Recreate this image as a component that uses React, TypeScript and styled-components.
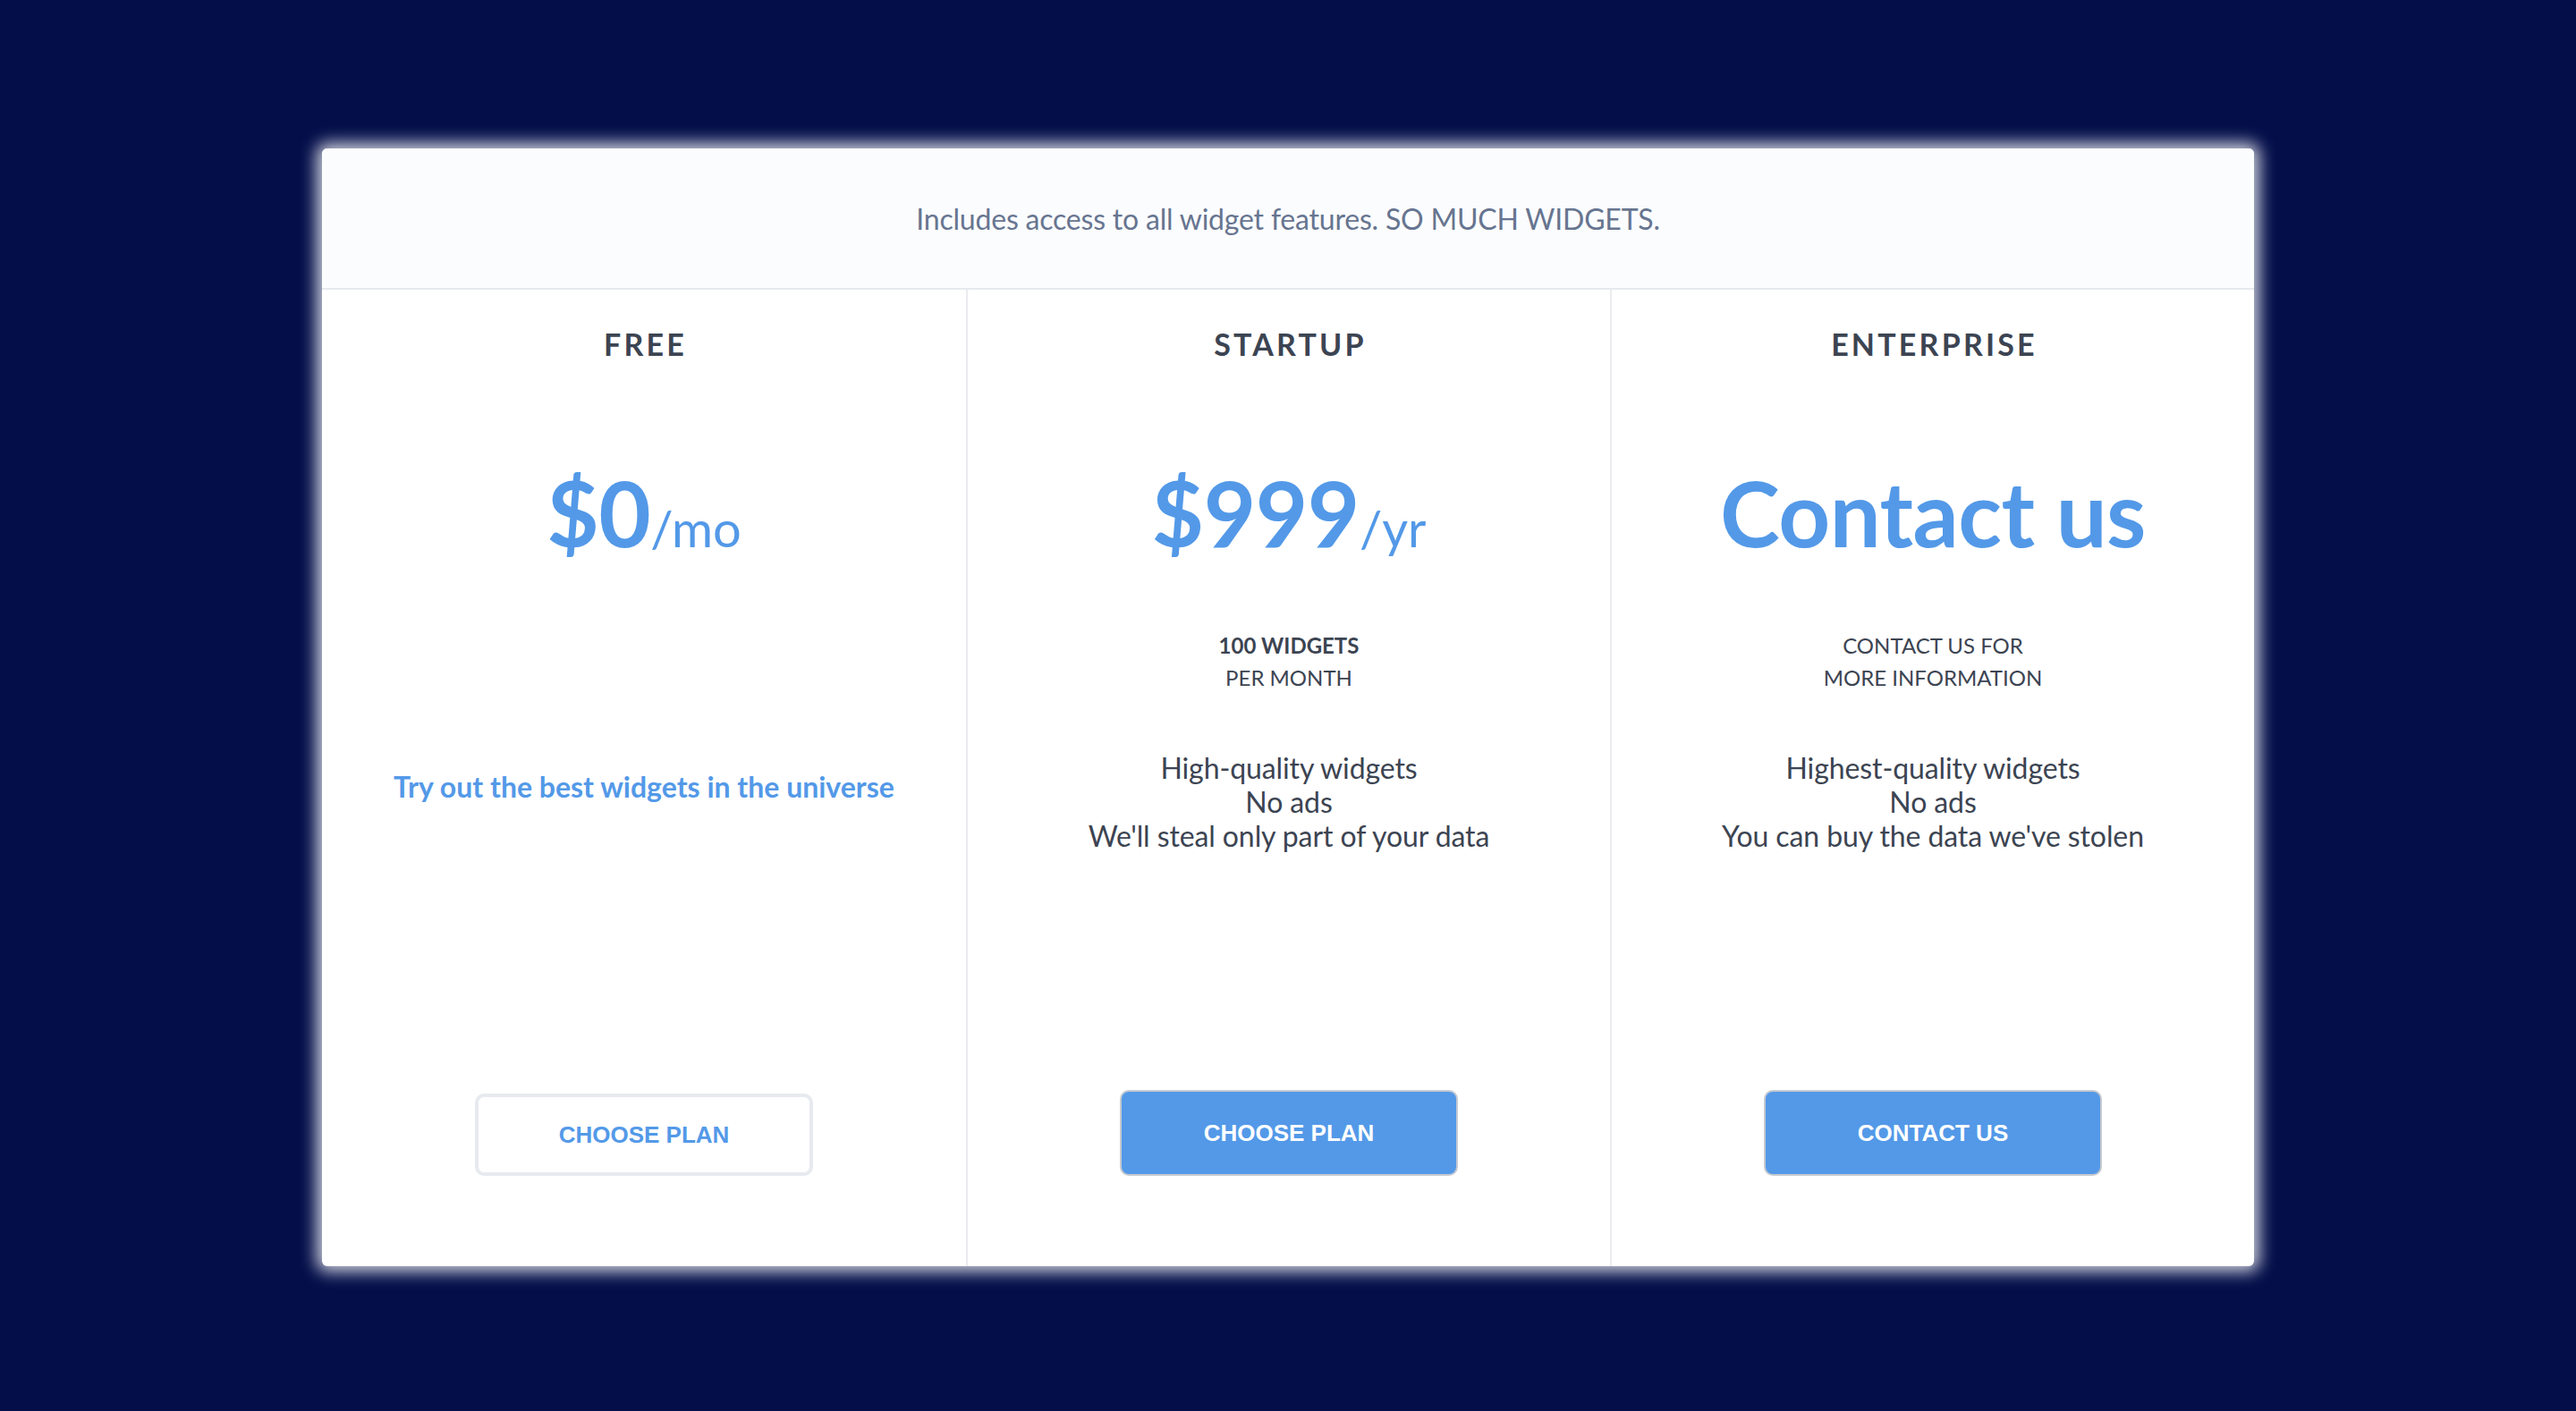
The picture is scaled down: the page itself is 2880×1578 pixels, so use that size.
import React from "react";
import styled, { createGlobalStyle } from "styled-components";

const GlobalStyle = createGlobalStyle`
  html, body {
    margin: 0;
    padding: 0;
    background: #040f4a;
  }
  body {
    font-family: Lato, "Open Sans", "Liberation Sans", sans-serif;
    -webkit-font-smoothing: antialiased;
  }
  * { box-sizing: border-box; }
`;

const Page = styled.main`
  min-height: 1578px;
  padding-top: 166px;
  display: flex;
  justify-content: center;
  align-items: flex-start;
  background: #040f4a;
`;

const Card = styled.section`
  width: 2160px;
  height: 1250px;
  background: #ffffff;
  border-radius: 6px;
  overflow: hidden;
  box-shadow: 0 0 18px 6px rgba(255, 255, 255, 0.82);
  display: flex;
  flex-direction: column;
`;

const Header = styled.header`
  height: 158px;
  flex: none;
  background: #fbfcfe;
  border-bottom: 2px solid #e6e9ee;
  display: flex;
  align-items: center;
  justify-content: center;
  font-size: 32px;
  letter-spacing: -0.2px;
  color: #677590;
  font-weight: 400;
`;

const Columns = styled.div`
  flex: 1;
  display: grid;
  grid-template-columns: repeat(3, 1fr);
`;

const Column = styled.div`
  display: flex;
  flex-direction: column;
  align-items: center;
  padding: 41px 0 101px;
  text-align: center;
  & + & {
    border-left: 2px solid #e9ebef;
  }
`;

const PlanName = styled.h2`
  margin: 0;
  font-size: 34px;
  line-height: 40px;
  font-weight: 700;
  letter-spacing: 3.2px;
  padding-left: 3px;
  color: #3c4452;
`;

const Price = styled.div`
  margin-top: 108px;
  font-size: 101px;
  line-height: 120px;
  font-weight: 700;
  color: #5399e8;
  letter-spacing: -0.5px;
`;

const Period = styled.span`
  font-size: 56px;
  line-height: 1;
  font-weight: 400;
  letter-spacing: 0;
`;

const Subtitle = styled.div`
  margin-top: 71px;
  font-size: 24px;
  line-height: 36px;
  color: #3c4452;
  text-transform: uppercase;
`;

const SubtitleStrong = styled.span`
  font-weight: 700;
`;

const Features = styled.ul`
  list-style: none;
  margin: 64px 0 0;
  padding: 0;
  font-size: 32px;
  line-height: 38px;
  letter-spacing: -0.1px;
  color: #3c4452;
`;

const Tagline = styled.p`
  margin: 228px 0 0;
  font-size: 32px;
  line-height: 38px;
  font-weight: 700;
  color: #5399e8;
`;

const Button = styled.button<{ $primary?: boolean }>`
  margin-top: auto;
  width: 378px;
  height: ${(p) => (p.$primary ? "96px" : "92px")};
  border-radius: 10px;
  border: ${(p) => (p.$primary ? "2px solid #c6cad0" : "4px solid #e7eaef")};
  background: ${(p) => (p.$primary ? "#5399e8" : "#ffffff")};
  color: ${(p) => (p.$primary ? "#ffffff" : "#5399e8")};
  font-family: "Liberation Sans", Arial, sans-serif;
  font-weight: 700;
  font-size: 26px;
  text-transform: uppercase;
  cursor: pointer;
  padding: 0;
`;

export default function App() {
  return (
    <>
      <GlobalStyle />
      <Page>
        <Card>
          <Header>Includes access to all widget features. SO MUCH WIDGETS.</Header>
          <Columns>
            <Column>
              <PlanName>FREE</PlanName>
              <Price>
                $0<Period>/mo</Period>
              </Price>
              <Tagline>Try out the best widgets in the universe</Tagline>
              <Button>Choose plan</Button>
            </Column>
            <Column>
              <PlanName>STARTUP</PlanName>
              <Price>
                $999<Period>/yr</Period>
              </Price>
              <Subtitle>
                <SubtitleStrong>100 widgets</SubtitleStrong>
                <br />
                per month
              </Subtitle>
              <Features>
                <li>High-quality widgets</li>
                <li>No ads</li>
                <li>We'll steal only part of your data</li>
              </Features>
              <Button $primary>Choose plan</Button>
            </Column>
            <Column>
              <PlanName>ENTERPRISE</PlanName>
              <Price>Contact us</Price>
              <Subtitle>
                Contact us for
                <br />
                more information
              </Subtitle>
              <Features>
                <li>Highest-quality widgets</li>
                <li>No ads</li>
                <li>You can buy the data we've stolen</li>
              </Features>
              <Button $primary>Contact us</Button>
            </Column>
          </Columns>
        </Card>
      </Page>
    </>
  );
}
